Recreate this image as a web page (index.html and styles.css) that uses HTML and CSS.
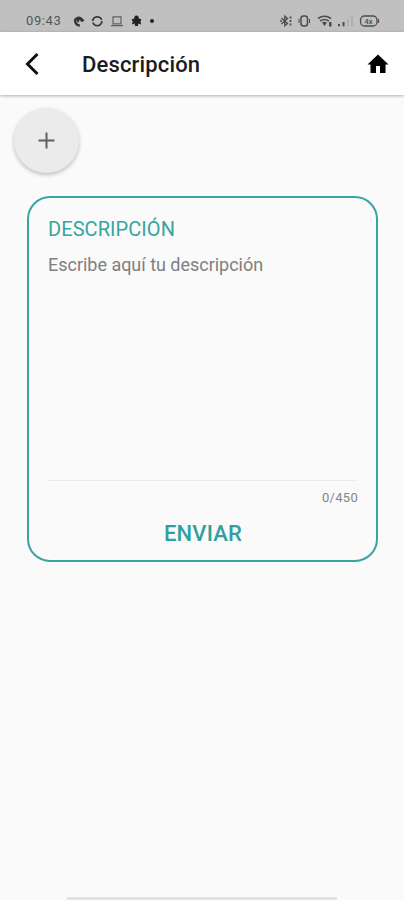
FILE: index.html
```
<!DOCTYPE html>
<html lang="es">
<head>
<meta charset="utf-8">
<title>Descripción</title>
<link rel="stylesheet" href="styles.css">
</head>
<body>
<div class="status">
  <span class="time">09:43</span>
  <svg class="status-left" width="86" height="14" viewBox="0 0 86 14" fill="none" stroke="#333">
    <path d="M7.800 11.500A4.800 4.800 0 0 1 3.500 4.800" stroke-width="2.400"/>
    <path d="M3.200 4.500Q8 .6 12 6.600L9.500 7.500 7.500 5 6 8.500" fill="#333" stroke-width="1"/>
    <path d="M20.800 5.800A4.800 4.800 0 0 1 29.800 5.800M20.800 8.500A4.800 4.800 0 0 0 29.800 8.500" stroke-width="1.500"/>
    <path d="M19.300 5.500h3l-1.300 2zM28.300 8.500h3l-1.500-2z" fill="#333" stroke="none"/>
    <path d="M41 2.800h8v7h-8zM39 11.600h12" stroke="#606060" stroke-width="1.200"/>
    <path d="M64.500 1.500c1.800 0 2.600 1.500 2.200 3l2.800.8-1 2 .6 3.200-2.700-.9-.5 2.400h-2.800l-.5-2.400-2.700.9.8-3-1.100-2.200 2.800-.8c-.5-1.500.4-3 2.100-3z" fill="#222" stroke="none"/>
    <circle cx="80" cy="7" r="2" fill="#222" stroke="none"/>
  </svg>
  <svg class="status-right" width="102" height="14" viewBox="0 0 102 14" fill="none" stroke="#4c4c4c">
    <path d="M2.500 4l6 5.500-2.700 2.200v-9.500L8.500 4.500l-6 5.500M1 7h2" stroke-width="1.300"/>
    <path d="M11.500 2.500v2M11.500 6v2M11.500 9.500v2" stroke-width="1.800"/>
    <rect x="22" y="2" width="6.500" height="10" rx="2.500" stroke-width="1.500"/>
    <path d="M20 5v4M30.500 5v4" stroke-width="1"/>
    <path d="M39 4.500Q45.500 0 52 4.500M41.200 7Q45.500 4 49.800 7" stroke-width="1.600"/>
    <path d="M43 8.500Q45.500 7 48 8.500L45.500 12zM50 8h2.500v4.500h-2.500z" fill="#4c4c4c" stroke="none"/>
    <path d="M60 10v2.300" stroke-width="2"/>
    <path d="M64.500 8v4.300" stroke-width="2"/>
    <path d="M69 5v7.300M73 2v10.300" stroke="#a9a9a9" stroke-width="1.500"/>
    <rect x="81.500" y="2" width="16.500" height="10" rx="4" stroke-width="1.300"/>
    <path d="M99.500 5v4" stroke-width="1.200"/>
    <text x="85.400" y="9.800" class="charge">4x</text>
  </svg>
</div>
<header class="appbar">
  <svg class="back" width="16" height="24" viewBox="0 0 16 24"><path d="M13.500 2 3.500 12 13.500 22" fill="none" stroke="#111" stroke-width="3"/></svg>
  <h1 class="title">Descripción</h1>
  <svg class="home" width="24" height="24" viewBox="0 0 24 24"><path d="M10 21v-7h4v7h5.500v-8.500H22.500L12 2.500 1.500 12.500h3V21z"/></svg>
</header>
<main>
  <button class="add" aria-label="Añadir"><svg width="17" height="17" viewBox="0 0 17 17"><path d="M8.500 .5v16M.5 8.500h16" stroke="#606060" stroke-width="2"/></svg></button>
  <section class="card">
    <h2 class="label">DESCRIPCIÓN</h2>
    <p class="field">Escribe aquí tu descripción</p>
    <div class="counter">0/450</div>
    <button class="send">ENVIAR</button>
  </section>
</main>
<div class="handle"></div>
</body>
</html>
```

FILE: styles.css
```
* { box-sizing: border-box; }
body {
  margin: 0;
  height: 900px;
  display: flex;
  flex-direction: column;
  overflow: hidden;
  background: #fafafa;
  font-family: Roboto, "Liberation Sans", sans-serif;
}
button { border: 0; padding: 0; background: none; font-family: inherit; }
.status {
  height: 32px;
  flex: none;
  display: flex;
  align-items: center;
  padding: 9px 23px 0 26px;
  background: #c0c0c0;
}
.time { width: 46px; font-size: 13px; line-height: 14px; letter-spacing: .6px; color: #555; }
.status-right { margin-left: auto; }
.charge { font-size: 7.5px; font-weight: 500; fill: #4c4c4c; stroke: none; }
.appbar {
  height: 63px;
  flex: none;
  display: flex;
  align-items: center;
  padding: 0 14px 0 24px;
  background: #fff;
  box-shadow: 0 1px 3px rgba(0, 0, 0, .3);
}
.title { margin: 0 auto 0 42px; padding-top: 2px; font-size: 22px; font-weight: 500; line-height: 26px; letter-spacing: .15px; color: #1c1c1c; }
main { flex: 1; padding: 13px 26px 0 27px; }
.add {
  display: flex;
  align-items: center;
  justify-content: center;
  width: 65px;
  height: 65px;
  margin-left: -13px;
  border-radius: 50%;
  background: #ebebeb;
  box-shadow: 0 2px 4px rgba(0, 0, 0, .24);
}
.card {
  display: flex;
  flex-direction: column;
  height: 366px;
  margin-top: 23px;
  padding: 18px 18px 0 19px;
  border: 2px solid #3ba4a1;
  border-radius: 23px;
}
.label { margin: 0; font-size: 20px; font-weight: 400; line-height: 26px; letter-spacing: .07px; color: #36a5a0; }
.field {
  margin: 0;
  height: 239px;
  padding-top: 12px;
  border-bottom: 1px solid #ececec;
  font-size: 18px;
  line-height: 22px;
  letter-spacing: -.02px;
  color: #7f7f7f;
}
.counter { margin-top: 9px; text-align: right; font-size: 13px; line-height: 16px; letter-spacing: .3px; color: #858585; }
.send { align-self: center; margin-top: 15px; font-size: 22px; font-weight: 500; line-height: 26px; letter-spacing: .15px; color: #30a19e; }
.handle { width: 270px; height: 3px; margin: 0 auto; background: #e3e3e3; }
```
